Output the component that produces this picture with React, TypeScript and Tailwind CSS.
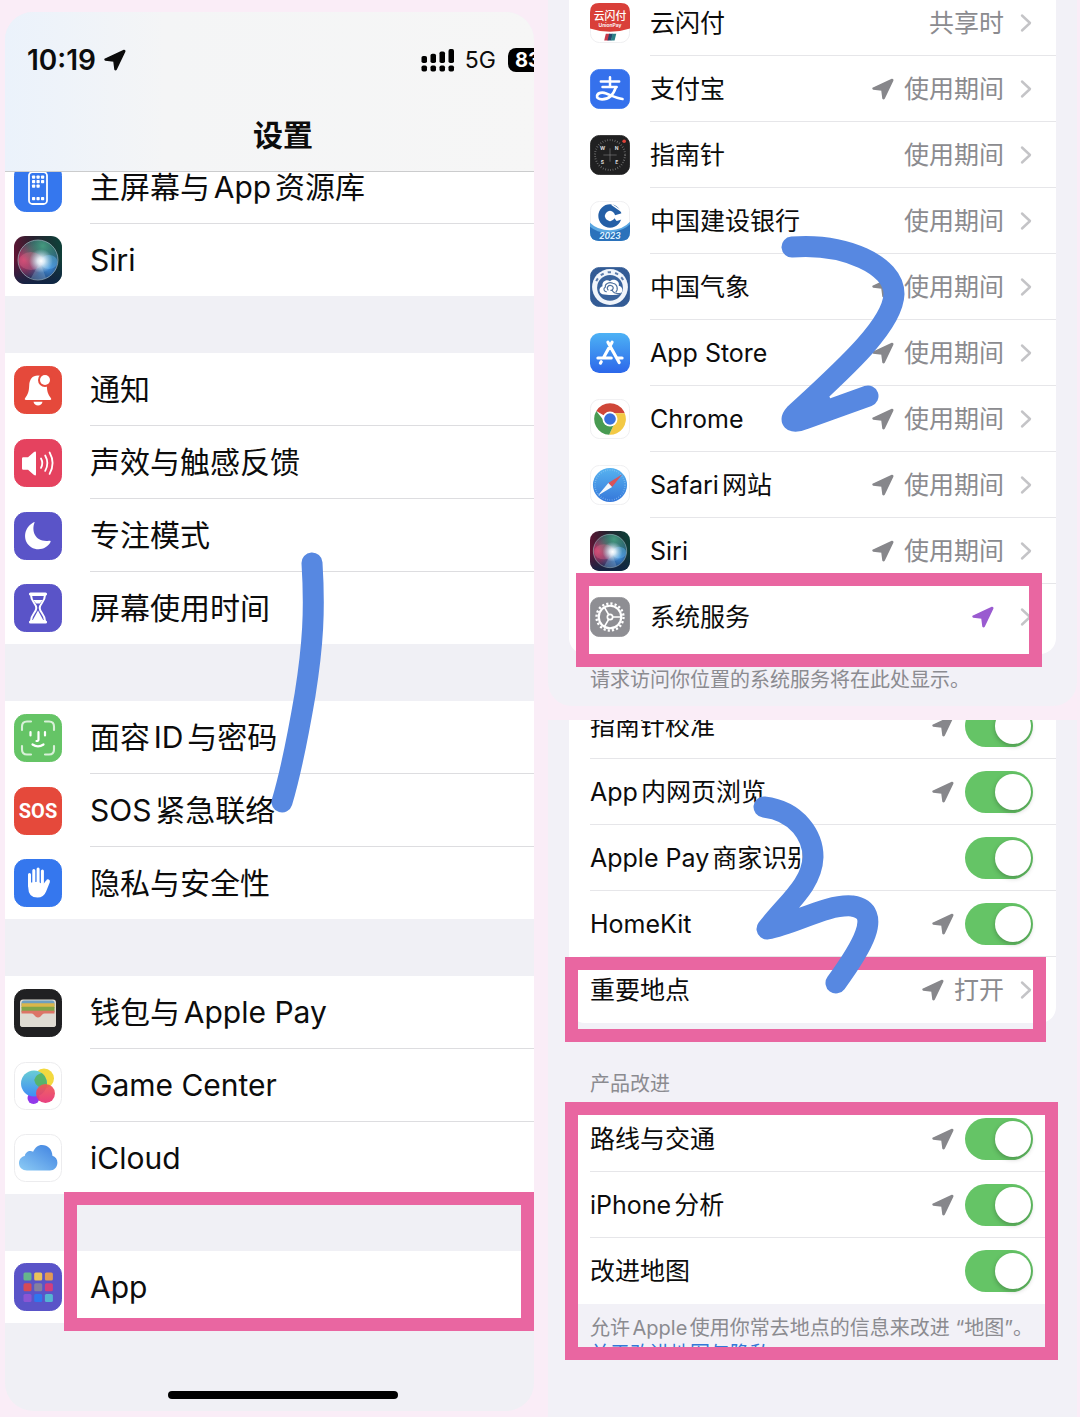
import type { ReactNode } from "react";
import { clsx } from "clsx";

function Arrow({ className }: { className?: string }) {
  return (
    <svg viewBox="0 0 24 24" className={clsx("shrink-0 fill-current stroke-current", className)} strokeWidth="1.6" strokeLinejoin="round" aria-hidden="true">
      <path d="M21.8 1.6 1.400 11Q.8 11.600 1.400 12L10.800 13 12 22.200Q12.600 23.200 13.200 22.200L22.600 2.600Q22.800 1.400 21.800 1.600Z" />
    </svg>
  );
}

function Chevron() {
  return (
    <svg viewBox="0 0 12 20" className="h-5 w-3 shrink-0 fill-none stroke-[#c4c4c7]" strokeWidth="2.4" strokeLinecap="round" strokeLinejoin="round" aria-hidden="true">
      <path d="M2 2.5 10 10 2 17.5" />
    </svg>
  );
}

/* App icons, all drawn on a 48 x 48 tile */

function Tile({ fill, outline, children }: { fill: string; outline?: boolean; children: ReactNode }) {
  return (
    <svg viewBox="0 0 48 48" className="size-full" aria-hidden="true">
      <rect x=".5" y=".5" width="47" height="47" rx="11" fill={fill} stroke={outline ? "#ececee" : fill} />
      {children}
    </svg>
  );
}

function HomeScreenIcon() {
  return (
    <Tile fill="#3577ee">
      <rect x="15" y="8" width="18" height="32" rx="3.5" fill="none" stroke="#fff" strokeWidth="1.8" />
      <g fill="#fff">
        {[11.5, 16, 20.5].map((y) =>
          [18, 22.5, 27].map((x) => (y > 20 && x > 26 ? null : <rect key={`${x}-${y}`} x={x} y={y} width="3.2" height="3.2" rx=".7" />)),
        )}
        {[18, 22.5, 27].map((x) => (
          <rect key={x} x={x} y="33" width="3.2" height="3.2" rx=".7" />
        ))}
      </g>
    </Tile>
  );
}

function SiriIcon() {
  return (
    <svg viewBox="0 0 48 48" className="size-full" aria-hidden="true">
      <defs>
        <linearGradient id="siriBg" x1="0" y1=".6" x2="1" y2=".4">
          <stop offset="0" stopColor="#651334" />
          <stop offset=".5" stopColor="#26222f" />
          <stop offset="1" stopColor="#0f3f38" />
        </linearGradient>
        <linearGradient id="siriBottom" x1="0" y1=".5" x2="0" y2="1">
          <stop offset="0" stopColor="#0d2547" stopOpacity="0" />
          <stop offset="1" stopColor="#0d2547" stopOpacity=".9" />
        </linearGradient>
        <radialGradient id="siriGreen" cx=".62" cy=".15" r=".6">
          <stop offset="0" stopColor="#44997f" />
          <stop offset="1" stopColor="#44997f" stopOpacity="0" />
        </radialGradient>
        <radialGradient id="siriPink" cx=".15" cy=".5" r=".5">
          <stop offset="0" stopColor="#c93f6c" />
          <stop offset="1" stopColor="#c93f6c" stopOpacity="0" />
        </radialGradient>
        <radialGradient id="siriBlue" cx=".75" cy=".68" r=".55">
          <stop offset="0" stopColor="#4192e0" />
          <stop offset="1" stopColor="#2a5aa8" stopOpacity=".2" />
        </radialGradient>
        <radialGradient id="siriGlow" cx=".5" cy=".5" r=".5">
          <stop offset="0" stopColor="#fff" />
          <stop offset=".3" stopColor="#eef8ff" stopOpacity=".85" />
          <stop offset="1" stopColor="#c4e0f4" stopOpacity="0" />
        </radialGradient>
      </defs>
      <rect width="48" height="48" rx="11" fill="url(#siriBg)" />
      <rect width="48" height="48" rx="11" fill="url(#siriBottom)" />
      <circle cx="24" cy="24" r="20" fill="url(#siriBlue)" />
      <circle cx="24" cy="24" r="20" fill="url(#siriPink)" />
      <circle cx="24" cy="24" r="20" fill="url(#siriGreen)" />
      <ellipse cx="17" cy="25" rx="12" ry="9" fill="#ef7093" opacity=".3" />
      <ellipse cx="35" cy="26" rx="8.500" ry="7" fill="#62b4f2" opacity=".45" />
      <path d="M26 26 17 42q7 3 15 0Z" fill="#9fbedb" opacity=".3" />
      <circle cx="27" cy="25" r="12" fill="url(#siriGlow)" />
      <circle cx="24" cy="24" r="20" fill="none" stroke="#a5bcc4" strokeOpacity=".65" strokeWidth="1" />
    </svg>
  );
}

function BellIcon() {
  return (
    <Tile fill="#e5493b">
      <path d="M24 9.5c-6 0-8.500 4-8.800 10-.3 6-1 8.500-4 12.500-.8 1.200-.4 2 .8 2h24c1.200 0 1.600-.8.800-2-3-4-3.700-6.500-4-12.500-.3-6-2.800-10-8.800-10Z" fill="#fff" />
      <path d="M19.500 35.700h9c-.6 2.500-2.200 3.800-4.500 3.800s-3.900-1.300-4.500-3.800Z" fill="#fff" />
      <circle cx="31" cy="14" r="7" fill="#e5493b" />
      <circle cx="31" cy="14" r="5" fill="#fff" />
    </Tile>
  );
}

function SpeakerIcon() {
  return (
    <Tile fill="#e5425f">
      <path d="M8 19.500q0-1.300 1.300-1.300h4.700l6-5.200q2-1.200 2 .8v21.400q0 2-2 .8l-6-5.200H9.300Q8 30.800 8 29.500Z" fill="#fff" />
      <g fill="none" stroke="#fff" strokeWidth="1.800" strokeLinecap="round">
        <path d="M27 19.500q2.600 4.700 0 9.400M31.200 16.500q4.300 7.700 0 15.400M35.600 13.500q6 10.700 0 21.400" />
      </g>
    </Tile>
  );
}

function MoonIcon() {
  return (
    <Tile fill="#5a54c8">
      <path d="M20.500 10.500C17 20 22 30.500 35 28.800q2.300-.4 1.500 1.300C33 37 24 39.500 17.200 35.200 8.800 29.800 9 17 18.500 11q2.700-1.700 2-.5Z" fill="#fff" />
    </Tile>
  );
}

function HourglassIcon() {
  return (
    <Tile fill="#5a54c8">
      <path d="M16.500 10h15M16.500 38h15" stroke="#fff" strokeWidth="3.200" strokeLinecap="round" />
      <path d="M17 11c0 7 5.300 8.500 5.300 13S17 30 17 37h14c0-7-5.300-8.500-5.300-13S31 18 31 11Z" fill="none" stroke="#fff" strokeWidth="2" />
      <path d="M19.200 16h9.600l-3 3.500h-3.600ZM24 26.500l3 5.500 3 5.500H18l3-5.500Z" fill="#fff" />
    </Tile>
  );
}

function FaceIdIcon() {
  return (
    <Tile fill="#65c466">
      <g fill="none" stroke="#fff" strokeLinecap="round">
        <path d="M8 16v-3.500Q8 7.500 13 7.500h4M31 7.500h4q5 0 5 5V16M40 32v3.500q0 5-5 5h-4M17 40.500h-4q-5 0-5-5V32" strokeWidth="2.100" strokeOpacity=".75" />
        <path d="M16.500 18v3.500M31 18v3.500M24.500 18v7.500q0 1.600-2 1.500M18.500 30.500q5.500 3.800 11 0" strokeWidth="2.200" />
      </g>
    </Tile>
  );
}

function SosIcon() {
  return (
    <Tile fill="#e5493b">
      <text x="24" y="31" textAnchor="middle" fontSize="20" fontWeight="700" fill="#fff" className="font-['Roboto',sans-serif]">
        SOS
      </text>
    </Tile>
  );
}

function HandIcon() {
  return (
    <Tile fill="#3577ee">
      <g stroke="#fff" strokeWidth="3" strokeLinecap="round" strokeLinejoin="round">
        <path d="M15.500 15.500V27M19.800 11.500V26M24.100 10v16M28.400 12v15" fill="none" />
        <path d="M15.500 25v4c0 6 3.500 8.300 8 8.300 4 0 6.300-2.300 7.600-5.600l3.600-9c.3-1-.9-1.600-1.600-.6L29.500 27 24 24Z" fill="#fff" strokeWidth="2.400" />
      </g>
    </Tile>
  );
}

function WalletIcon() {
  return (
    <Tile fill="#202022">
      <rect x="6" y="10.500" width="36" height="27.500" rx="3" fill="#dedbd3" />
      <path d="M7.500 14q0-2.500 2.500-2.500h28q2.500 0 2.500 2.500v3h-33Z" fill="#6e9fc0" />
      <path d="M7.500 14.200h33v5h-33Z" fill="#dbb64a" />
      <path d="M7.500 17.800h33v5h-33Z" fill="#80a548" />
      <path d="M7.500 21.800h33v4.500h-33Z" fill="#dc7567" />
      <path d="M6 24.500h11.500c2.300 0 3 1.700 4 2.700 1.500 1.500 3.500 1.500 5 0 1-1 1.700-2.700 4-2.700H42V35q0 3-3 3H9q-3 0-3-3Z" fill="#dedbd3" />
      <path d="M17.500 24.500c2.300 0 3 2.200 4 3 1.500 1.300 3.500 1.300 5 0 1-.8 1.700-3 4-3Z" fill="#dc7567" />
    </Tile>
  );
}

function GameCenterIcon() {
  return (
    <Tile fill="#fff" outline>
      <defs>
        <linearGradient id="gcBlue" x1="0" y1="0" x2="0" y2="1">
          <stop offset="0" stopColor="#69cdd4" />
          <stop offset="1" stopColor="#3f8df5" />
        </linearGradient>
        <linearGradient id="gcPink" x1="0" y1="0" x2="0" y2="1">
          <stop offset="0" stopColor="#ef5a54" />
          <stop offset="1" stopColor="#e73277" />
        </linearGradient>
      </defs>
      <circle cx="30" cy="16.500" r="10" fill="#f3d93f" />
      <circle cx="19.500" cy="36" r="6" fill="#9238ea" />
      <circle cx="20" cy="21.500" r="13" fill="url(#gcBlue)" />
      <path d="M27.800 11A13 13 0 0 1 32 26.200 10 10 0 0 1 20.200 18 10 10 0 0 1 27.800 11Z" fill="#57b457" opacity=".85" />
      <circle cx="31.500" cy="31.500" r="9.500" fill="url(#gcPink)" opacity=".93" />
    </Tile>
  );
}

function CloudIcon() {
  return (
    <Tile fill="#fff" outline>
      <defs>
        <linearGradient id="cloud" x1="0" y1="1" x2="1" y2="0">
          <stop offset="0" stopColor="#8dccf5" />
          <stop offset="1" stopColor="#3d80e0" />
        </linearGradient>
      </defs>
      <path d="M13 36.500c-4.500 0-8-3-8-7.200 0-4 2.700-6.600 5.800-7.200.3-4 5-6.300 8.300-4.300C21 13.500 24 11 28 11c5.800 0 10.300 4.500 10.400 10.800 3 .8 5 3.500 5 7 0 4.500-3.300 7.700-7.500 7.700Z" fill="url(#cloud)" />
    </Tile>
  );
}

const APP_DOTS = ["#66b58b", "#e9c35b", "#e39a55", "#d74a55", "#85809f", "#d13f7e", "#8b55d4", "#2f76ee", "#54b5d2"];

function AppsIcon() {
  return (
    <Tile fill="#5a54c8">
      {APP_DOTS.map((color, i) => (
        <rect key={color} x={9.5 + (i % 3) * 10.7} y={9.5 + Math.floor(i / 3) * 10.7} width="8" height="8" rx="1.500" fill={color} />
      ))}
    </Tile>
  );
}

function UnionPayIcon() {
  return (
    <Tile fill="#fff" outline>
      <path d="M0 11Q0 0 11 0h26q11 0 11 11v19.500q-24 8-48 0Z" fill="#d93f39" />
      <text x="24" y="20" textAnchor="middle" fontSize="13" fontWeight="500" fill="#fff">云闪付</text>
      <text x="24" y="29" textAnchor="middle" fontSize="6" fontWeight="600" fill="#fff">UnionPay</text>
      <path d="M19 37h5l-2 8h-5Z" fill="#c93a4b" />
      <path d="M23 37h4.500l-2 8H21Z" fill="#27466d" />
      <path d="M27 37h4.500l-2 8H25Z" fill="#2b7f86" />
    </Tile>
  );
}

function AlipayIcon() {
  return (
    <Tile fill="#3571ec">
      <g fill="none" stroke="#fff" strokeLinecap="round">
        <path d="M24 10v10M13 15h22M15 21.500h17" strokeWidth="3" />
        <path d="M31 22C28 31 22 36.500 14.500 36.500c-4.500 0-6.500-2-6-4.500.8-3.500 6-4.500 11-2.700 5.500 2 11.500 5.700 19.500 6.700" strokeWidth="3.200" />
      </g>
    </Tile>
  );
}

function CompassIcon() {
  return (
    <Tile fill="#202021">
      <circle cx="24" cy="24" r="18" fill="none" stroke="#777" strokeWidth="2.400" strokeDasharray=".8 2.200" />
      <path d="M24 16v16M16 24h16" stroke="#888" strokeWidth=".7" />
      <g fontSize="6" fontWeight="700" fill="#ddd" textAnchor="middle">
        <text x="15" y="17.500">W</text>
        <text x="32" y="17.500">N</text>
        <text x="15" y="35">S</text>
        <text x="32" y="35">E</text>
      </g>
      <circle cx="41" cy="7.500" r="2.200" fill="#dc4239" />
    </Tile>
  );
}

function CcbIcon() {
  return (
    <Tile fill="#fff" outline>
      <path d="M0 26q9 9 24 9t24-10v12q0 11-11 11H11Q0 48 0 37Z" fill="#5aa7e2" />
      <path d="M0 31q12 10 30 6 12-3 18-9v9q0 11-11 11H11Q0 48 0 37Z" fill="#2b72bb" />
      <circle cx="24" cy="18" r="10" fill="none" stroke="#245fa6" strokeWidth="8" />
      <path d="M27 18 39 14.500V22l-7 2Z" fill="#fff" />
      <path d="M26 4 38 12.500" stroke="#fff" strokeWidth="1.600" />
      <path d="m24 11.500 6.500 6.500-6.500 6.500-6.500-6.500Z" fill="#fff" />
      <text x="24" y="45.500" textAnchor="middle" fontSize="10" fontWeight="700" fontStyle="italic" fill="#d8efff">2023</text>
    </Tile>
  );
}

function WeatherIcon() {
  return (
    <Tile fill="#335b95">
      <circle cx="24" cy="24" r="21.500" fill="#f1f5fb" />
      <path d="M7.500 17A18 18 0 0 1 40.500 17" fill="none" stroke="#5c7cac" strokeWidth="2.400" strokeDasharray="4 5" />
      <circle cx="24" cy="25" r="15.500" fill="#3a639c" />
      <path d="M17 33c-6 0-8-8-2-10-1-6 5-9 9-6 5-4 12 0 10.500 5.500 5 .5 6 8 1 10q-4 2-18.500.5Z" fill="#fff" />
      <path d="M37 31.500c-5 1-9-.5-10.500-3.500M22 28c-3-3 0-7 4-5.500 3.500 2 1.500 6-1.500 5.500M31 30c3-3 2-10-3.500-10.500-5-2-10 1-9 4.500-3 1.500-2 6 1.500 5.500" fill="none" stroke="#50729f" strokeWidth="1.400" />
    </Tile>
  );
}

function AppStoreIcon() {
  return (
    <svg viewBox="0 0 48 48" className="size-full" aria-hidden="true">
      <defs>
        <linearGradient id="store" x1="0" y1="0" x2="0" y2="1">
          <stop offset="0" stopColor="#4db2f5" />
          <stop offset="1" stopColor="#2c67ea" />
        </linearGradient>
      </defs>
      <rect width="48" height="48" rx="11" fill="url(#store)" />
      <g stroke="#fff" strokeWidth="3.800" strokeLinecap="round">
        <path d="M26.500 11 16.500 29M21.500 11 35 35.500M9.500 30h16M33.500 30h5M13.500 34.500 12.500 36.200" />
      </g>
    </svg>
  );
}

function ChromeIcon() {
  return (
    <Tile fill="#fff" outline>
      <path d="M24 24 7.550 14.500A19 19 0 0 1 40.450 14.500L41.700 17H24Z" fill="#cf4638" />
      <path d="M41.700 17A19 19 0 0 1 23 43L30.060 27.500 28 17Z" fill="#f3c944" />
      <path d="M7.550 14.500A19 19 0 0 0 23 43L30.060 27.500 17.940 27.500Z" fill="#489b52" />
      <circle cx="24" cy="24" r="9" fill="#fff" />
      <circle cx="24" cy="24" r="7" fill="#3870dc" />
    </Tile>
  );
}

function SafariIcon() {
  return (
    <Tile fill="#fff" outline>
      <defs>
        <linearGradient id="safari" x1="0" y1="0" x2="0" y2="1">
          <stop offset="0" stopColor="#57b3f0" />
          <stop offset="1" stopColor="#3577da" />
        </linearGradient>
      </defs>
      <circle cx="24" cy="24" r="20.500" fill="url(#safari)" />
      <circle cx="24" cy="24" r="18" fill="none" stroke="#9accf4" strokeWidth="1.600" strokeDasharray=".6 2.200" />
      <path d="M38.500 11.500 22 21.500l4.500 5Z" fill="#d9535a" />
      <path d="M9.500 36.500 22 21.500l4.500 5Z" fill="#f4f8fc" />
    </Tile>
  );
}

function GearIcon() {
  return (
    <Tile fill="#8e8e93">
      <g fill="none" stroke="#fff">
        <circle cx="24" cy="24" r="16.200" strokeWidth="2.800" strokeDasharray="2.600 2.489" />
        <circle cx="24" cy="24" r="13.500" strokeWidth="2.600" />
        <circle cx="24" cy="24" r="3.200" strokeWidth="2" />
        <path d="M27.200 24H37M22.400 21.200 17.500 12.700M22.400 26.800 17.500 35.300" strokeWidth="2" />
      </g>
    </Tile>
  );
}

type Item = { label: string; icon: ReactNode };

const SETTINGS: Item[][] = [
  [
    { label: "通知", icon: <BellIcon /> },
    { label: "声效与触感反馈", icon: <SpeakerIcon /> },
    { label: "专注模式", icon: <MoonIcon /> },
    { label: "屏幕使用时间", icon: <HourglassIcon /> },
  ],
  [
    { label: "面容ID与密码", icon: <FaceIdIcon /> },
    { label: "SOS紧急联络", icon: <SosIcon /> },
    { label: "隐私与安全性", icon: <HandIcon /> },
  ],
  [
    { label: "钱包与Apple Pay", icon: <WalletIcon /> },
    { label: "Game Center", icon: <GameCenterIcon /> },
    { label: "iCloud", icon: <CloudIcon /> },
  ],
];

const TOP_ITEMS: Item[] = [
  { label: "主屏幕与App资源库", icon: <HomeScreenIcon /> },
  { label: "Siri", icon: <SiriIcon /> },
];

const APPS: (Item & { value?: string; arrow?: string })[] = [
  { label: "云闪付", icon: <UnionPayIcon />, value: "共享时" },
  { label: "支付宝", icon: <AlipayIcon />, value: "使用期间", arrow: "text-[#87878b]" },
  { label: "指南针", icon: <CompassIcon />, value: "使用期间" },
  { label: "中国建设银行", icon: <CcbIcon />, value: "使用期间" },
  { label: "中国气象", icon: <WeatherIcon />, value: "使用期间", arrow: "text-[#87878b]" },
  { label: "App Store", icon: <AppStoreIcon />, value: "使用期间", arrow: "text-[#87878b]" },
  { label: "Chrome", icon: <ChromeIcon />, value: "使用期间", arrow: "text-[#87878b]" },
  { label: "Safari网站", icon: <SafariIcon />, value: "使用期间", arrow: "text-[#87878b]" },
  { label: "Siri", icon: <SiriIcon />, value: "使用期间", arrow: "text-[#87878b]" },
  { label: "系统服务", icon: <GearIcon />, arrow: "text-[#9a5bd0]" },
];

function SettingsGroup({ items }: { items: Item[] }) {
  return (
    <ul className="bg-white">
      {items.map((item) => (
        <li key={item.label} className="group">
          <a href="#" className="flex items-center gap-7 pl-[9px]">
            <span className="size-12 shrink-0">{item.icon}</span>
            <span className="flex h-[73px] flex-1 items-center border-b border-[#dddde0] text-[30px] group-last:h-[72px] group-last:border-b-0 [text-autospace:normal]">
              {item.label}
            </span>
          </a>
        </li>
      ))}
    </ul>
  );
}

function ToggleRow({ label, arrow }: { label: string; arrow?: boolean }) {
  return (
    <li className="group pl-[21px]">
      <label className="flex h-[66px] items-center border-b border-[#e6e6e9] pr-[23px] text-[25px] group-last:border-b-0">
        <span className="flex-1 pt-0.5 [text-autospace:normal]">{label}</span>
        {arrow && <Arrow className="mr-[11px] size-[22px] text-[#87878b]" />}
        <input
          type="checkbox"
          role="switch"
          defaultChecked
          className="flex h-[42px] w-[68px] shrink-0 appearance-none items-center rounded-full bg-[#d8d8dc] p-0.5 before:size-9 before:rounded-full before:bg-white before:shadow-[0_2px_5px_rgba(0,0,0,0.25)] checked:justify-end checked:bg-[#65c466]"
        />
      </label>
    </li>
  );
}

function Frame({ className }: { className: string }) {
  return <div className={clsx("pointer-events-none absolute border-[13px] border-[#e966a1]", className)} />;
}

function Pen({ className, viewBox, d }: { className: string; viewBox: string; d: string }) {
  return (
    <svg viewBox={viewBox} className={clsx("pointer-events-none absolute fill-none stroke-[#5788e1]", className)} strokeWidth="21" strokeLinecap="round" strokeLinejoin="round" aria-hidden="true">
      <path d={d} />
    </svg>
  );
}

function SettingsScreen() {
  return (
    <section className="relative flex flex-col overflow-hidden rounded-[28px] bg-[#f0f0f5]">
      <header className="border-b border-[#cbcccd] bg-linear-to-r from-[#ebf2fb] via-[#f4f5f6] via-30% to-[#f6f6f6]">
        <div className="flex items-center pt-7 pl-[22px]">
          <span className="text-[28px] leading-10 font-semibold">10:19</span>
          <Arrow className="ml-2 size-[22px]" />
          <svg viewBox="0 0 34 24" className="ml-auto h-6 w-[34px]" aria-hidden="true">
            {[0, 9, 18, 27].map((x, i) => (
              <g key={x}>
                <rect x={x + 0.5} y={8 - i * 2.3} width="5.500" height={7 + i * 2.3} rx="1.800" />
                <rect x={x + 0.5} y="17.500" width="5.500" height="6" rx="1.800" />
              </g>
            ))}
          </svg>
          <span className="ml-[10px] text-[23px] leading-10">5G</span>
          <span className="ml-3 h-6 w-[26px] overflow-hidden rounded-l-lg bg-black pl-[7px] text-[20px] leading-6 font-bold whitespace-nowrap text-white">
            83
          </span>
        </div>
        <h1 className="pt-[35px] pb-4 pl-[27px] text-center text-[30px] leading-10 font-bold">设置</h1>
      </header>
      <div className="overflow-hidden">
        <div className="-mt-[21px]">
          <SettingsGroup items={TOP_ITEMS} />
        </div>
      </div>
      <div className="flex flex-col gap-[57px] pt-[57px]">
        {SETTINGS.map((items) => (
          <SettingsGroup key={items[0].label} items={items} />
        ))}
        <div className="relative">
          <SettingsGroup items={[{ label: "App", icon: <AppsIcon /> }]} />
          <Frame className="-top-[59px] right-0 -bottom-2 left-[59px]" />
        </div>
      </div>
      <div className="flex justify-center pt-[68px] pb-3 pl-[27px]">
        <div className="h-2 w-[230px] rounded-full bg-black" />
      </div>
      <Pen className="top-[538px] left-[265px] h-[270px] w-[60px]" viewBox="270 550 60 270" d="M312 563C315 610 313 645 305 695 299 730 291 772 282 802" />
    </section>
  );
}

function LocationScreen() {
  return (
    <section className="relative rounded-b-[24px] bg-[#f2f1f7] px-[21px]">
      <div className="overflow-hidden rounded-b-2xl bg-white pb-1">
        <ul className="-mt-[10px]">
          {APPS.map((app) => (
            <li key={app.label} className="group">
              <a href="#" className="flex items-center gap-5 pl-[21px]">
                <span className="size-10 shrink-0">{app.icon}</span>
                <span className="flex h-[66px] flex-1 items-center border-b border-[#e6e6e9] pr-6 text-[25px] group-last:border-b-0">
                  <span className="flex-1 pt-0.5 [text-autospace:normal]">{app.label}</span>
                  {app.arrow && <Arrow className={clsx("mr-[10px] size-[22px]", app.arrow)} />}
                  <span className="mr-4 pt-0.5 text-[#8b8b8f]">{app.value}</span>
                  <Chevron />
                </span>
              </a>
            </li>
          ))}
        </ul>
      </div>
      <p className="pt-3.5 pb-3.5 pl-[21px] text-[20px] leading-6 text-[#8b8b90]">请求访问你位置的系统服务将在此处显示。</p>
      <Frame className="right-[35px] bottom-[39px] left-7 h-[94px]" />
      <Pen
        className="top-[230px] left-[222px] h-[210px] w-[150px]"
        viewBox="770 230 150 210"
        d="M792 247C845 243 894 265 894 294 893 325 845 368 795 414 787 423 797 422 804 419L868 396M794 417 820 401 804 418"
      />
    </section>
  );
}

function SystemServicesScreen() {
  return (
    <section className="relative flex-1 bg-[#f2f1f7] px-[21px]">
      <div className="relative">
        <div className="overflow-hidden rounded-b-2xl bg-white">
          <ul className="-mt-[27px]">
            <ToggleRow label="指南针校准" arrow />
            <ToggleRow label="App内网页浏览" arrow />
            <ToggleRow label="Apple Pay商家识别" />
            <ToggleRow label="HomeKit" arrow />
            <li className="pl-[21px]">
              <a href="#" className="flex h-[66px] items-center pr-6 text-[25px]">
                <span className="flex-1 pt-0.5">重要地点</span>
                <Arrow className="mr-[10px] size-[22px] text-[#87878b]" />
                <span className="mr-4 pt-0.5 text-[#8b8b8f]">打开</span>
                <Chevron />
              </a>
            </li>
          </ul>
        </div>
        <Frame className="right-[10px] -bottom-[19px] -left-1 h-[85px]" />
      </div>
      <h2 className="pt-[49px] pb-[10px] pl-[21px] text-[20px] leading-6 text-[#8b8b90]">产品改进</h2>
      <div className="relative">
        <ul className="bg-white">
          <ToggleRow label="路线与交通" arrow />
          <ToggleRow label="iPhone分析" arrow />
          <ToggleRow label="改进地图" />
        </ul>
        <div className="h-12 overflow-hidden pt-[11px] pl-[21px] text-[20px] leading-[26px] whitespace-nowrap text-[#8b8b90] [text-autospace:normal]">
          <p>允许Apple使用你常去地点的信息来改进 “地图”。</p>
          <a href="#" className="text-[#3478d8]">关于改进地图与隐私</a>
        </div>
        <Frame className="-top-1 -right-[2px] -bottom-2 -left-1" />
      </div>
      <Pen
        className="top-[70px] left-[202px] h-[220px] w-[150px]"
        viewBox="750 790 150 220"
        d="M764 807C798 811 813 837 813 857 812 885 787 903 767 929 795 924 826 904 852 906 885 911 860 950 836 983"
      />
    </section>
  );
}

export default function App() {
  return (
    <main
      lang="zh-CN"
      className="grid min-h-screen grid-cols-2 gap-[14px] bg-[#faedf7] pr-[3px] pl-[5px] font-['Inter','Noto_Sans_CJK_SC',sans-serif] text-[#0c0c0c]"
    >
      <div className="pt-3 pb-1.5">
        <SettingsScreen />
      </div>
      <div className="flex flex-col gap-[14px]">
        <LocationScreen />
        <SystemServicesScreen />
      </div>
    </main>
  );
}
